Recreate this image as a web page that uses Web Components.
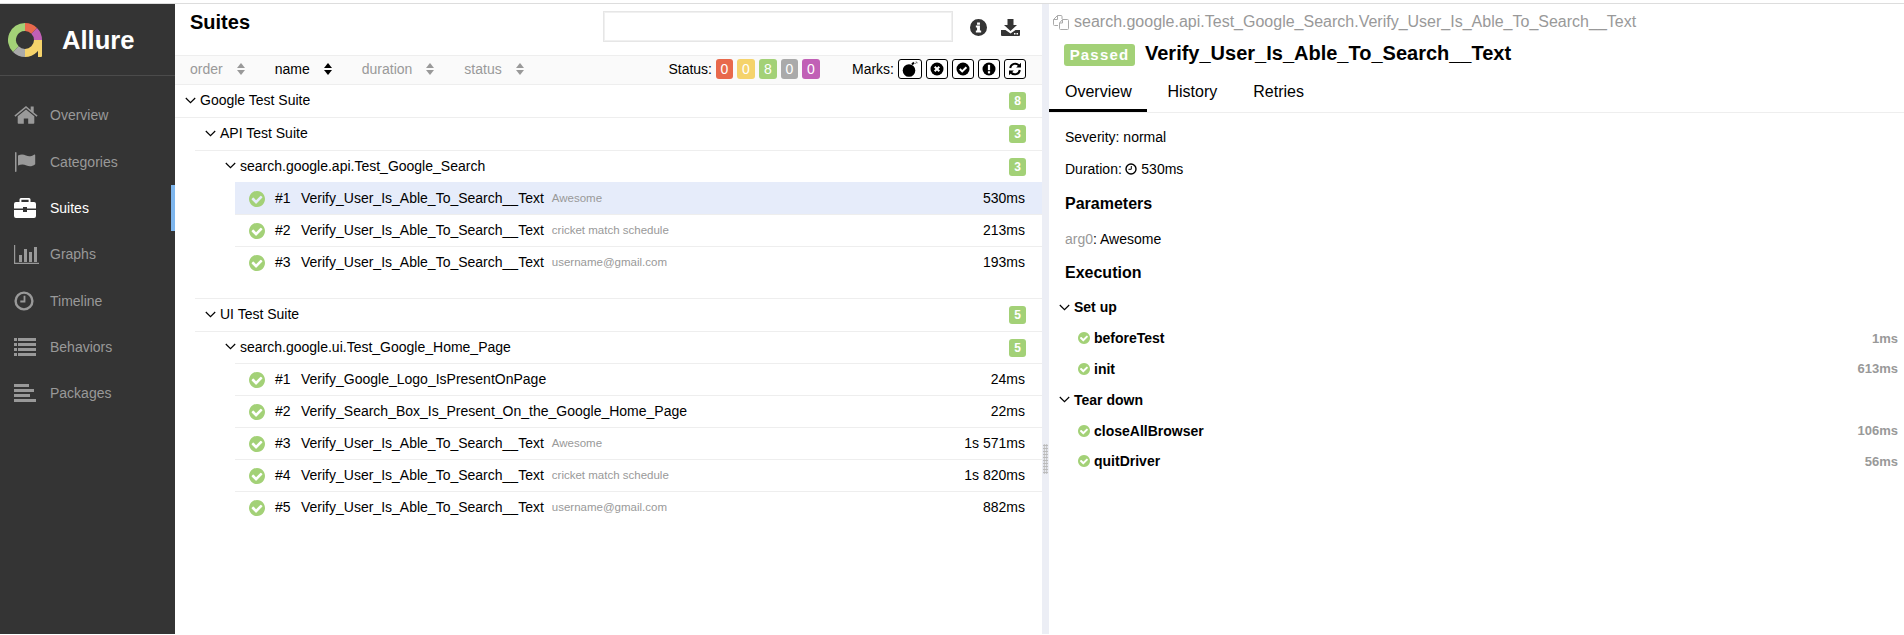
<!DOCTYPE html>
<html><head><meta charset="utf-8"><title>Allure</title>
<style>
html,body{margin:0;padding:0;height:635px;overflow:hidden;background:#fff;font-family:"Liberation Sans",Arial,sans-serif;color:#000}
</style></head><body>
<allure-app>
  <allure-sidebar slot="side">
    <nav-item icon="home">Overview</nav-item>
    <nav-item icon="flag">Categories</nav-item>
    <nav-item icon="case" active>Suites</nav-item>
    <nav-item icon="chart">Graphs</nav-item>
    <nav-item icon="clock">Timeline</nav-item>
    <nav-item icon="list">Behaviors</nav-item>
    <nav-item icon="pack">Packages</nav-item>
  </allure-sidebar>
  <suites-pane slot="main">
    <tree-row depth="0" count="8">Google Test Suite</tree-row>
    <tree-row depth="1" count="3">API Test Suite</tree-row>
    <tree-row depth="2" count="3">search.google.api.Test_Google_Search</tree-row>
    <test-row n="#1" dur="530ms" sub="Awesome" active>Verify_User_Is_Able_To_Search__Text</test-row>
    <test-row n="#2" dur="213ms" sub="cricket match schedule">Verify_User_Is_Able_To_Search__Text</test-row>
    <test-row n="#3" dur="193ms" sub="username@gmail.com">Verify_User_Is_Able_To_Search__Text</test-row>
    <tree-row depth="1" count="5" top>UI Test Suite</tree-row>
    <tree-row depth="2" count="5">search.google.ui.Test_Google_Home_Page</tree-row>
    <test-row n="#1" dur="24ms">Verify_Google_Logo_IsPresentOnPage</test-row>
    <test-row n="#2" dur="22ms">Verify_Search_Box_Is_Present_On_the_Google_Home_Page</test-row>
    <test-row n="#3" dur="1s 571ms" sub="Awesome">Verify_User_Is_Able_To_Search__Text</test-row>
    <test-row n="#4" dur="1s 820ms" sub="cricket match schedule">Verify_User_Is_Able_To_Search__Text</test-row>
    <test-row n="#5" dur="882ms" sub="username@gmail.com">Verify_User_Is_Able_To_Search__Text</test-row>
  </suites-pane>
  <test-pane slot="detail">
    <step-group>Set up</step-group>
    <step-row time="1ms">beforeTest</step-row>
    <step-row time="613ms">init</step-row>
    <step-group>Tear down</step-group>
    <step-row time="106ms">closeAllBrowser</step-row>
    <step-row time="56ms">quitDriver</step-row>
  </test-pane>
</allure-app>
<script>
const CHECK='<svg viewBox="128 128 1536 1536" width="100%" height="100%" style="display:block"><path fill="currentColor" d="M1412 734q0-28-18-46l-91-90q-19-19-45-19t-45 19l-408 407-226-226q-19-19-45-19t-45 19l-91 90q-18 18-18 46 0 27 18 45l362 362q19 19 45 19 27 0 46-19l543-543q18-18 18-45zm252 162q0 209-103 385.5t-279.5 279.5-385.5 103-385.5-103-279.5-279.5-103-385.5 103-385.5 279.5-279.5 385.5-103 385.5 103 279.5 279.5 103 385.5z"/></svg>';
const CHEV='<svg viewBox="0 0 11 7" width="11" height="7" style="display:block"><path d="M.8 1l4.7 4.700L10.200 1" fill="none" stroke="#000" stroke-width="1.200"/></svg>';
const SORT=c=>`<svg viewBox="0 0 10 14" width="10" height="14" style="display:block"><path d="M5 1l4 5H1z" fill="${c}"/><path d="M5 13l4-5H1z" fill="${c}"/></svg>`;
const ICONS={
home:'<svg viewBox="0 0 24 18" width="24" height="18"><path fill="currentColor" d="M12 3.400L3.700 10.200V17a.8.8 0 0 0 .8.8h5.300v-5.300h4.400v5.300h5.300a.8.8 0 0 0 .8-.8v-6.800z"/><path fill="currentColor" d="M12 0L.4 9.600l1 1.200L12 2l10.600 8.800 1-1.200-3.900-3.200V.6h-3v3.400z"/></svg>',
flag:'<svg viewBox="0 0 24 20" width="24" height="20"><rect x="1" y="0" width="1.500" height="20" rx=".7" fill="currentColor"/><path fill="currentColor" d="M4 3.500c3-1.400 5.500-1.200 8 0s5 1.200 8-.8c.8-.4 1.200-.2 1.200.6v8.900c-3 2.300-5.800 2.500-8.700 1.200s-5.300-1.300-8.500 0z"/></svg>',
case:'<svg viewBox="0 0 22 20" width="22" height="20"><path fill="currentColor" d="M7 0h8a1.500 1.500 0 0 1 1.500 1.500V4H20a2 2 0 0 1 2 2v4.500H13V9H9v1.500H0V6a2 2 0 0 1 2-2h3.500V1.500A1.500 1.500 0 0 1 7 0zm.4 1.800V4h7.200V1.800z" fill-rule="evenodd"/><path fill="currentColor" d="M0 12h9v2h4v-2h9v6a2 2 0 0 1-2 2H2a2 2 0 0 1-2-2z"/></svg>',
chart:'<svg viewBox="0 0 25 19" width="25" height="19"><path fill="currentColor" d="M0 0h1.200v17.800H25V19H0z"/><rect x="5" y="10" width="3" height="7" fill="currentColor"/><rect x="10" y="4" width="3" height="13" fill="currentColor"/><rect x="15" y="7" width="3" height="10" fill="currentColor"/><rect x="20" y="2" width="3" height="15" fill="currentColor"/></svg>',
clock:'<svg viewBox="0 0 20 20" width="20" height="20"><circle cx="10" cy="10" r="8.400" fill="none" stroke="currentColor" stroke-width="2.400"/><path d="M10.500 4.800v5.700H6.300" fill="none" stroke="currentColor" stroke-width="1.800"/></svg>',
list:'<svg viewBox="0 0 22 18" width="22" height="18" fill="currentColor"><rect y="0" width="3" height="3"/><rect x="4" y="0" width="18" height="3"/><rect y="5" width="3" height="3"/><rect x="4" y="5" width="18" height="3"/><rect y="10" width="3" height="3"/><rect x="4" y="10" width="18" height="3"/><rect y="15" width="3" height="3"/><rect x="4" y="15" width="18" height="3"/></svg>',
pack:'<svg viewBox="0 0 22 18" width="22" height="18" fill="currentColor"><rect y="0" width="15" height="3"/><rect y="5" width="20" height="3"/><rect y="10" width="16" height="3"/><rect y="15" width="22" height="3"/></svg>'
};
function def(name,css,html){
  customElements.define(name,class extends HTMLElement{
    constructor(){super();this.attachShadow({mode:'open'})}
    connectedCallback(){
      const h=typeof html==='function'?html(this):html;
      this.shadowRoot.innerHTML=`<style>${css}</style>${h}`;
    }
  });
}
def('count-badge',`:host{display:block;width:17px;height:18px;line-height:18px;background:#a3d177;border-radius:3px;color:#fff;font-size:12px;text-align:center;font-weight:bold}`,`<slot></slot>`);
def('status-chip',`:host{display:block;height:20px;line-height:20px;border-radius:3px;color:#fff;font-size:14px;text-align:center;background:var(--c)}`,`<slot></slot>`);
def('mark-button',`:host{display:flex;align-items:center;justify-content:center;box-sizing:border-box;height:20px;border:1px solid #000;border-radius:3px;background:#fff}`,`<slot></slot>`);
def('sort-item',`:host{display:flex;align-items:center;gap:13px;color:#999;font-size:14px}:host([on]){color:#000}`,t=>`<slot></slot>${SORT(t.hasAttribute('on')?'#000':'#999')}`);
def('nav-item',`:host{display:flex;align-items:center;height:46.300px;padding-left:14px;color:#999;font-size:14px;box-sizing:border-box}
:host([active]){color:#fff;box-shadow:inset -4px 0 0 #7eb6ed}
.i{width:25px;height:20px;display:flex;align-items:center;margin-right:11px;}`,t=>`<div class="i">${ICONS[t.getAttribute('icon')]}</div><slot></slot>`);
def('allure-sidebar',`:host{display:block;background:#343434;height:100%;color:#fff}
.b{display:flex;align-items:center;height:71px;border-bottom:1px solid #4b4b4b;padding-left:8px}
.t{font:bold 25.600px "Liberation Sans",sans-serif;margin-left:20px;padding-top:1px}
.n{padding-top:16.300px}`,`<div class="b"><svg width="34" height="34" viewBox="0 0 34 34" style="display:block;margin-top:1px">
<g fill="none" stroke-width="8"><path d="M17 4A13 13 0 0 1 26.200 7.800" stroke="#e8694c"/><path d="M26.200 7.800A13 13 0 0 1 30 17" stroke="#c160b6"/><path d="M30 17A13 13 0 0 1 17 30" stroke="#f5d36b"/><path d="M17 30A13 13 0 0 1 7.800 26.200" stroke="#aaa"/><path d="M7.800 26.200A13 13 0 0 1 17 4" stroke="#a3d177"/></g><path d="M30 17h4v16.500l-1 .5h-3z" fill="#f5d36b"/></svg><span class="t">Allure</span></div><div class="n"><slot></slot></div>`);
def('tree-row',`:host{display:flex;align-items:center;box-sizing:border-box;font-size:14px;height:33px;padding-right:16px;border-bottom:1px solid #eee;padding-left:10px}
:host([depth="1"]){margin-left:20px}:host([depth="2"]){margin-left:40px;height:31px;border-bottom:0}
:host([top]){border-top:1px solid #eee;height:34px;margin-top:20px}
.c{margin:0 4px 2px 0}.s{flex:1;padding-bottom:2px}`,t=>`<span class="c">${CHEV}</span><span class="s"><slot></slot></span><count-badge>${t.getAttribute('count')}</count-badge>`);
def('status-icon',`:host{display:block;color:#a3d177}`,CHECK);
def('test-row',`:host{display:flex;align-items:center;box-sizing:border-box;height:32px;margin-left:60px;border-top:1px solid #eee;padding-left:14px;padding-right:17px;font-size:14px}
:host([active]){background:#e6ecfa;border-top-color:#e6ecfa}
status-icon{width:16px;height:16px;margin-right:10px}.n{width:26px;padding-bottom:2px}.x{padding-bottom:2px}
.sub{color:#999;font-size:11.500px;margin-left:8px;flex:1;padding-bottom:2px}`,t=>`<status-icon></status-icon><span class="n">${t.getAttribute('n')}</span><span class="x"><slot></slot></span><span class="sub">${t.getAttribute('sub')||''}</span><span class="x">${t.getAttribute('dur')}</span>`);
def('suites-pane',`:host{display:block;height:100%;overflow:hidden}
.h{display:flex;height:51px;box-sizing:border-box;align-items:flex-start;padding-left:15px}
h2{margin:7px 0 0;font-size:20px;line-height:23px;flex:1}
.in{width:350px;height:31px;box-sizing:border-box;border:1px solid #e6e6e6;outline:0;margin-top:7px;background:#fff;box-shadow:inset 0 0 0 1px #f0f0f0}
.ic{display:flex;gap:14px;margin:15px 0 0 17px;width:72px;color:#343434;align-items:center}
.bar{display:flex;align-items:center;height:30px;box-sizing:border-box;background:#fafafa;border-top:1px solid #eee;border-bottom:1px solid #eee;font-size:14px;padding:0 16px 2px 15px}
.so{display:flex;flex:1;gap:29px}
.lab{margin-right:4px}
.chips{display:flex;gap:4px;margin-right:32px}
.mk{display:flex;gap:4px}`,`<div class="h"><h2>Suites</h2><input class="in" aria-label="search"><div class="ic">
<svg width="17" height="17" viewBox="128 128 1536 1536"><path fill="currentColor" d="M896 128a768 768 0 1 0 0 1536 768 768 0 0 0 0-1536zm-130 310h260v210H766zm370 910H656v-170h110V896H656V726h370v452h110z" fill-rule="evenodd"/></svg>
<svg width="19" height="17" viewBox="0 0 19 17"><path fill="currentColor" d="M6.500 0h6v6H16l-6.500 6L3 6h3.500z"/><path fill="currentColor" d="M0 11h4.500l5 3.500 5-3.500H19v5a1 1 0 0 1-1 1H1a1 1 0 0 1-1-1z"/><rect x="13" y="14" width="1.500" height="1.500" fill="#fff"/><rect x="15.500" y="14" width="1.500" height="1.500" fill="#fff"/></svg>
</div></div>
<div class="bar"><div class="so"><sort-item>order</sort-item><sort-item on>name</sort-item><sort-item>duration</sort-item><sort-item>status</sort-item></div>
<span class="lab">Status:</span><div class="chips"><status-chip style="--c:#e8694c;width:17px">0</status-chip><status-chip style="--c:#f5d36b;width:18px">0</status-chip><status-chip style="--c:#a3d177;width:18px">8</status-chip><status-chip style="--c:#aaa;width:17px">0</status-chip><status-chip style="--c:#c160b6;width:18px">0</status-chip></div>
<span class="lab">Marks:</span><div class="mk">
<mark-button style="width:24px"><svg width="17" height="16" viewBox="0 0 17 16"><circle cx="7" cy="9.500" r="6.300" fill="#000"/><path d="M10 3.500l2-2" stroke="#000" stroke-width="2"/><path d="M13 3l2-2M13.500 1h1.500v1.500" stroke="#777" stroke-width=".8" fill="none"/></svg></mark-button>
<mark-button style="width:22px"><svg width="14" height="14" viewBox="0 0 14 14"><circle cx="7" cy="7" r="6.500" fill="#000"/><path d="M4.700 4.700l4.600 4.600M9.300 4.700l-4.600 4.600" stroke="#fff" stroke-width="2"/></svg></mark-button>
<mark-button style="width:22px"><svg width="14" height="14" viewBox="0 0 14 14"><circle cx="7" cy="7" r="6.500" fill="#000"/><path d="M3.800 7l2.400 2.400 4.200-4.200" stroke="#fff" stroke-width="2" fill="none"/></svg></mark-button>
<mark-button style="width:22px"><svg width="14" height="14" viewBox="0 0 14 14"><circle cx="7" cy="7" r="6.500" fill="#000"/><rect x="5.900" y="2.800" width="2.200" height="5.400" fill="#fff"/><rect x="5.900" y="9.200" width="2.200" height="2.200" fill="#fff"/></svg></mark-button>
<mark-button style="width:22px"><svg width="14" height="14" viewBox="0 0 14 14"><path d="M2.200 6A5 5 0 0 1 11 3.500" fill="none" stroke="#000" stroke-width="2"/><path d="M13 .8v4.800H8.200z" fill="#000"/><path d="M11.800 8A5 5 0 0 1 3 10.500" fill="none" stroke="#000" stroke-width="2"/><path d="M1 13.200V8.400h4.800z" fill="#000"/></svg></mark-button>
</div></div><slot></slot>`);
def('step-group',`:host{display:flex;align-items:center;font-weight:bold;font-size:14px;height:31.300px;padding-left:10px}.c{margin-right:4px}`,`<span class="c">${CHEV}</span><slot></slot>`);
def('step-row',`:host{display:flex;align-items:center;font-weight:bold;font-size:14px;height:30.500px;padding-left:29px;padding-right:6px}
status-icon{width:12px;height:12px;margin-right:4px}.s{flex:1}.t{color:#999;font-size:13px}`,t=>`<status-icon></status-icon><span class="s"><slot></slot></span><span class="t">${t.getAttribute('time')}</span>`);
def('test-pane',`:host{display:block;height:100%;overflow:hidden;font-size:14px}
.p{color:#999;font-size:16px;display:flex;align-items:center;height:22px;margin:7px 0 0 4px}
.p svg{margin-right:5px}
.t{display:flex;align-items:center;margin:9px 0 0 15px;height:26px}
.st{background:#a3d177;color:#fff;font:bold 15px/22px "Liberation Sans",sans-serif;letter-spacing:1.200px;border-radius:3px;margin-right:10px;height:22px;width:71px;text-align:center;flex:none}
h1{font-size:20px;margin:0;line-height:26px;padding-bottom:4px}
.tabs{display:flex;border-bottom:1px solid #eee;height:38px;margin-top:6px;font-size:16px;line-height:36px}
.on{box-shadow:inset 0 -3px 0 #000;width:98px;box-sizing:border-box;padding-left:16px}
.hi{padding-left:20.500px}.re{padding-left:36px}
.b{padding-left:16px}.l{height:32px;line-height:32px;display:flex;align-items:center;gap:3px}
.l svg{margin:0 1px 0 .5px}
h3{margin:0;font-size:16px;line-height:20px}
.g{color:#999}
.steps{margin-top:8.700px}`,`<div class="p"><svg width="16" height="15" viewBox="0 0 16 15"><path d="M5 10.500H1.500a1 1 0 0 1-1-1V4.500l4-4H8a1 1 0 0 1 1 1V4M9.500 4.500h5a1 1 0 0 1 1 1v8a1 1 0 0 1-1 1h-7a1 1 0 0 1-1-1V8zM4.500.5v4h-4M9.500 4.500v3.500h-3" fill="none" stroke="#aaa" stroke-width="1"/></svg>search.google.api.Test_Google_Search.Verify_User_Is_Able_To_Search__Text</div>
<div class="t"><span class="st">Passed</span><h1>Verify_User_Is_Able_To_Search__Text</h1></div>
<div class="tabs"><span class="on">Overview</span><span class="hi">History</span><span class="re">Retries</span></div>
<div class="b"><div class="l" style="margin-top:8px">Severity: normal</div><div class="l">Duration: <svg width="12" height="12" viewBox="0 0 12 12"><circle cx="6" cy="6" r="5" fill="none" stroke="#000" stroke-width="1.400"/><path d="M6.300 3v3.300H3.500" fill="none" stroke="#000"/></svg> 530ms</div>
<h3 style="margin-top:9px">Parameters</h3><div class="l" style="margin-top:9px;display:block"><span class="g">arg0</span>: Awesome</div><h3 style="margin-top:8px">Execution</h3></div>
<div class="steps"><slot></slot></div>`);
def('allure-app',`:host{display:grid;grid-template-columns:175px 867px 7px 1fr;height:631px;border-top:1px solid #ddd;margin-top:3px;box-sizing:border-box}
.d{background:#eceef5;display:flex;justify-content:center;align-items:flex-start}
.g{width:5px;height:30px;margin-top:440px;background-image:radial-gradient(#bbb 1px,transparent 1.200px);background-size:2.500px 3px}`,`<slot name="side"></slot><slot name="main"></slot><div class="d"><div class="g"></div></div><slot name="detail"></slot>`);
</script>
</body></html>
